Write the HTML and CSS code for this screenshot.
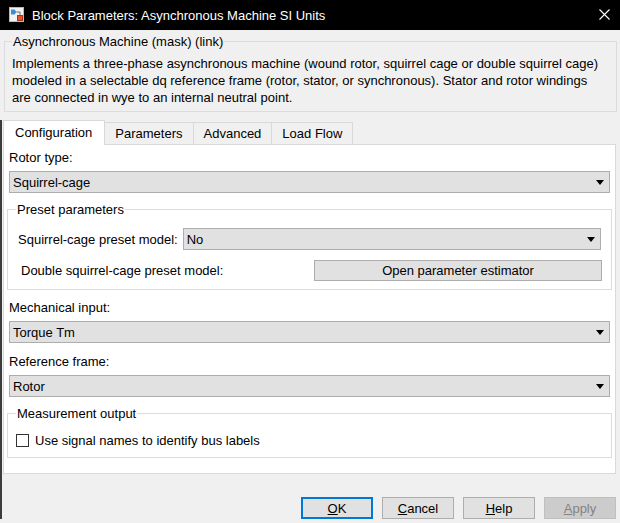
FILE: index.html
```html
<!DOCTYPE html>
<html lang="en">
<head>
<meta charset="utf-8">
<title>Block Parameters: Asynchronous Machine SI Units</title>
<link rel="stylesheet" href="styles.css">
</head>
<body>
<div class="window">
  <header class="titlebar">
    <svg class="app-icon" viewBox="0 0 15 15" aria-hidden="true">
      <rect x="0.5" y="0.5" width="14" height="14" fill="#f2f2f2" stroke="#b8b8b8"/>
      <path d="M2 2.5 h3.5 l2 2.5 l-2 2.5 h-3.5 z" fill="#3b8ed8"/>
      <path d="M7.5 5 h3.5 v3" stroke="#6b6b6b" fill="none"/>
      <rect x="8.5" y="8.5" width="5" height="5" fill="#e4552b" stroke="#a8321a"/>
    </svg>
    <span class="title">Block Parameters: Asynchronous Machine SI Units</span>
    <svg class="close" viewBox="0 0 11 11" aria-hidden="true">
      <path d="M0.5 0.5 L10.5 10.5 M10.5 0.5 L0.5 10.5" stroke="#fff" stroke-width="1.1"/>
    </svg>
  </header>

  <fieldset class="desc">
    <legend>Asynchronous Machine (mask) (link)</legend>
    <p>Implements a three-phase asynchronous machine (wound rotor, squirrel cage or double squirrel cage) modeled in a selectable dq reference frame (rotor, stator, or synchronous). Stator and rotor windings are connected in wye to an internal neutral point.</p>
  </fieldset>

  <div class="body-area">
    <nav class="tabs">
      <div class="tab active">Configuration</div>
      <div class="tab">Parameters</div>
      <div class="tab">Advanced</div>
      <div class="tab">Load Flow</div>
    </nav>

    <section class="panel">
      <div class="field-label">Rotor type:</div>
      <div class="select"><span>Squirrel-cage</span><svg class="arrow" viewBox="0 0 8 5"><path d="M0 0 H8 L4 5 Z" fill="#000"/></svg></div>

      <fieldset class="group">
        <legend>Preset parameters</legend>
        <div class="row">
          <span class="row-label">Squirrel-cage preset model:</span>
          <div class="select grow"><span>No</span><svg class="arrow" viewBox="0 0 8 5"><path d="M0 0 H8 L4 5 Z" fill="#000"/></svg></div>
        </div>
        <div class="row row2">
          <span class="row-label shifted">Double squirrel-cage preset model:</span>
          <button class="btn estimator" type="button">Open parameter estimator</button>
        </div>
      </fieldset>

      <div class="field-label after-group">Mechanical input:</div>
      <div class="select"><span>Torque Tm</span><svg class="arrow" viewBox="0 0 8 5"><path d="M0 0 H8 L4 5 Z" fill="#000"/></svg></div>

      <div class="field-label after-select">Reference frame:</div>
      <div class="select"><span>Rotor</span><svg class="arrow" viewBox="0 0 8 5"><path d="M0 0 H8 L4 5 Z" fill="#000"/></svg></div>

      <fieldset class="group measure">
        <legend>Measurement output</legend>
        <label class="check-row"><span class="checkbox"></span>Use signal names to identify bus labels</label>
      </fieldset>
    </section>

    <footer class="buttons">
      <button class="btn dlg default" type="button"><u>O</u>K</button>
      <button class="btn dlg" type="button"><u>C</u>ancel</button>
      <button class="btn dlg" type="button"><u>H</u>elp</button>
      <button class="btn dlg disabled" type="button"><u>A</u>pply</button>
    </footer>
  </div>
</div>
</body>
</html>
```
FILE: styles.css
```css
* { box-sizing: border-box; }
html, body { margin: 0; padding: 0; }
body {
  width: 620px;
  height: 523px;
  overflow: hidden;
  background: #f0f0f0;
  font-family: "Liberation Sans", Arial, sans-serif;
  font-size: 13px;
  color: #000;
}
.window { width: 620px; height: 523px; }

/* title bar */
.titlebar {
  height: 30px;
  background: #000;
  color: #fff;
  display: flex;
  align-items: center;
  padding-left: 9px;
}
.app-icon { width: 15px; height: 15px; margin-right: 8px; margin-top: -1px; }
.title { flex: 1; font-size: 13px; }
.close { width: 11px; height: 11px; margin-right: 10px; margin-top: -1px; }

/* description */
.desc {
  margin: 4px 3px 0 4px;
  border: 1px solid #dcdcdc;
  padding: 6px 7px 5px 7px;
  min-width: 0;
}
.desc legend { padding: 0 1px; line-height: 15px; }
.desc p { margin: 0; line-height: 17px; }

/* lower area with thin dark window edge on the left */
.body-area {
  margin-top: 8px;
  border-left: 2px solid #3c3c3c;
}

/* tabs */
.tabs {
  display: flex;
  align-items: flex-end;
  margin: 0 0 -1px 1px;
  height: 25px;
  position: relative;
  z-index: 1;
}
.tab {
  height: 23px;
  line-height: 22px;
  padding: 0 10px;
  border: 1px solid #d9d9d9;
  background: #f0f0f0;
  margin-left: -1px;
}
.tab:first-child { margin-left: 0; }
.tab.active {
  height: 25px;
  line-height: 24px;
  padding: 0 12px 0 11px;
  background: #fff;
  border-bottom: none;
}

/* panel */
.panel {
  margin: 0 4px 0 1px;
  height: 330px;
  border: 1px solid #d9d9d9;
  background: #fff;
  padding: 4px 5px 0 5px;
}
.field-label { line-height: 17px; margin-bottom: 5px; }
.field-label.after-group { margin-top: 9px; }
.field-label.after-select { margin-top: 10px; }

.select {
  height: 22px;
  border: 1px solid #adadad;
  background: #e1e1e1;
  display: flex;
  align-items: center;
  justify-content: space-between;
  padding: 0 5px 0 3px;
}
.arrow { width: 8px; height: 5px; }

.group {
  margin: 9px -2px 0 -2px;
  border: 1px solid #dcdcdc;
  padding: 11px 10px 8px 10px;
  min-width: 0;
}
.group legend { padding: 0 1px; margin-left: -2px; line-height: 15px; }

.row { display: flex; align-items: center; height: 22px; }
.row-label { margin-right: 5px; }
.row .grow { flex: 1; }
.row2 { margin-top: 10px; height: 21px; }
.shifted { margin-left: 3px; }

.btn {
  font-family: "Liberation Sans", Arial, sans-serif;
  font-size: 13px;
  color: #000;
  background: #e1e1e1;
  border: 1px solid #adadad;
  padding: 0;
  margin: 0;
}
.estimator {
  width: 288px;
  height: 21px;
  margin-left: auto;
  margin-right: -1px;
}

.measure { margin-top: 9px; padding-bottom: 8px; }
.check-row { display: flex; align-items: center; line-height: 17px; }
.checkbox {
  width: 13px;
  height: 13px;
  border: 1px solid #333;
  background: #fff;
  margin-left: -2px;
  margin-right: 6px;
}

/* dialog buttons */
.buttons {
  display: flex;
  justify-content: flex-end;
  gap: 9px;
  margin-top: 23px;
  padding-right: 4px;
}
.dlg { width: 72px; height: 22px; }
.dlg.default { border: 2px solid #0078d7; }
.dlg.disabled { background: #cccccc; border-color: #bfbfbf; color: #838383; }
```
